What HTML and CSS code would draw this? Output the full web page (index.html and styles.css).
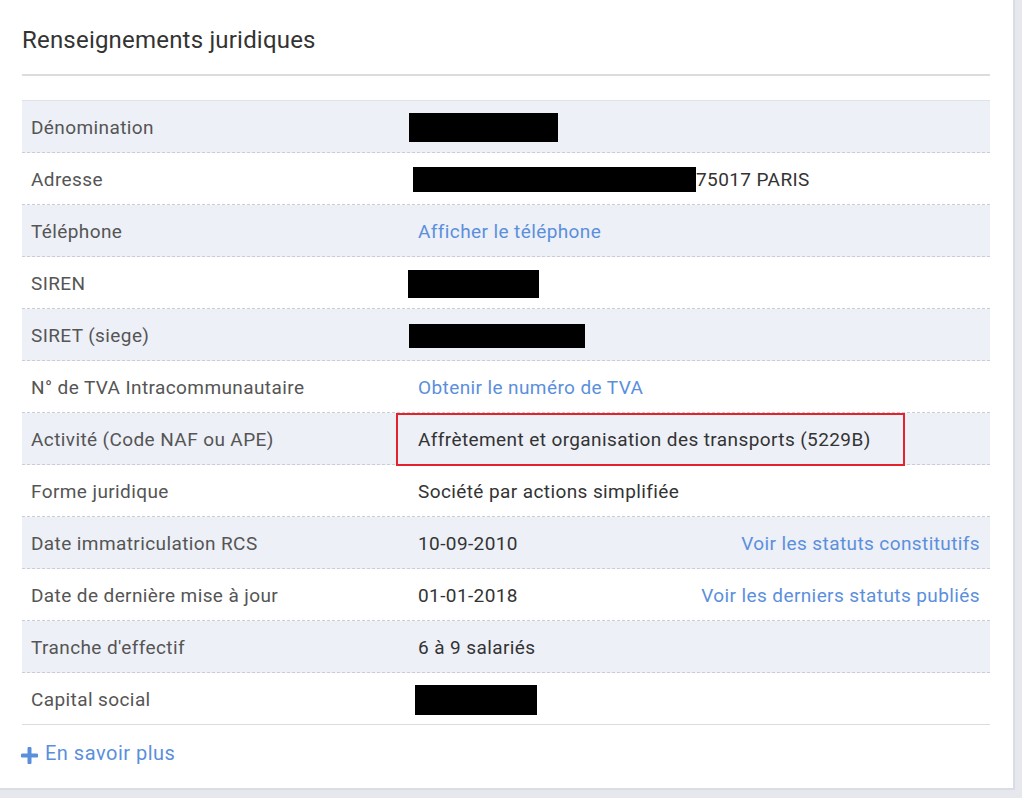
FILE: index.html
```html
<!DOCTYPE html>
<html lang="fr">
<head>
<meta charset="utf-8">
<title>Renseignements juridiques</title>
<link rel="stylesheet" href="styles.css">
</head>
<body>
<div class="card">
  <h2 class="title">Renseignements juridiques</h2>
  <div class="table">
    <div class="row alt">
      <div class="label">Dénomination</div>
      <div class="value"><span class="redact" style="width:149px;height:29px;margin-left:-9px"></span></div>
    </div>
    <div class="row">
      <div class="label">Adresse</div>
      <div class="value"><span class="redact" style="width:283px;height:25px;margin-left:-5px"></span><span>75017 PARIS</span></div>
    </div>
    <div class="row alt">
      <div class="label">Téléphone</div>
      <div class="value"><a class="link" href="#">Afficher le téléphone</a></div>
    </div>
    <div class="row">
      <div class="label">SIREN</div>
      <div class="value"><span class="redact" style="width:131px;height:28px;margin-left:-10px"></span></div>
    </div>
    <div class="row alt">
      <div class="label">SIRET (siege)</div>
      <div class="value"><span class="redact" style="width:176px;height:24px;margin-left:-9px"></span></div>
    </div>
    <div class="row">
      <div class="label">N° de TVA Intracommunautaire</div>
      <div class="value"><a class="link" href="#">Obtenir le numéro de TVA</a></div>
    </div>
    <div class="row alt">
      <div class="label">Activité (Code NAF ou APE)</div>
      <div class="value highlight"><span>Affrètement et organisation des transports (5229B)</span><span class="mark"></span></div>
    </div>
    <div class="row">
      <div class="label">Forme juridique</div>
      <div class="value"><span>Société par actions simplifiée</span></div>
    </div>
    <div class="row alt">
      <div class="label">Date immatriculation RCS</div>
      <div class="value split"><span>10-09-2010</span><a class="link" href="#">Voir les statuts constitutifs</a></div>
    </div>
    <div class="row">
      <div class="label">Date de dernière mise à jour</div>
      <div class="value split"><span>01-01-2018</span><a class="link" href="#">Voir les derniers statuts publiés</a></div>
    </div>
    <div class="row alt">
      <div class="label">Tranche d'effectif</div>
      <div class="value"><span>6 à 9 salariés</span></div>
    </div>
    <div class="row last">
      <div class="label">Capital social</div>
      <div class="value"><span class="redact" style="width:122px;height:30px;margin-left:-3px"></span></div>
    </div>
  </div>
  <a class="more" href="#">
    <svg class="plus" width="17" height="17" viewBox="0 0 17 17" aria-hidden="true"><path d="M8.5 1.5v14M1.5 8.5h14" stroke="#5b8fdc" stroke-width="4" stroke-linecap="round"/></svg>
    <span>En savoir plus</span>
  </a>
</div>
</body>
</html>
```

FILE: styles.css
```css
html, body {
  margin: 0;
  padding: 0;
}
body {
  background: #e6e8ee;
  font-family: Roboto, "Liberation Sans", Arial, sans-serif;
  width: 1022px;
  height: 798px;
  overflow: hidden;
}
.card {
  box-sizing: border-box;
  width: 1015px;
  height: 790px;
  background: #fff;
  border-right: 2px solid #d9dce2;
  border-bottom: 2px solid #d9dce2;
  padding: 0 23px 0 22px;
}
.title {
  margin: 0;
  padding: 26px 0 0 0;
  height: 48px;
  font-size: 24px;
  line-height: 28px;
  font-weight: 400;
  letter-spacing: 0.2px;
  color: #333;
  border-bottom: 2px solid #dcdcdc;
}
.table {
  margin-top: 24px;
  border-top: 1px solid #dfe2e8;
}
.row {
  display: flex;
  height: 52px;
  box-sizing: border-box;
  border-bottom: 1px dashed #c8ccd4;
  font-size: 19px;
  letter-spacing: 0.4px;
  align-items: center;
}
.row.alt {
  background: #edf0f7;
}
.row.last {
  border-bottom: 1px solid #dcdcdc;
}
.label {
  width: 387px;
  padding: 2px 0 0 9px;
  box-sizing: border-box;
  color: #555;
}
.value {
  flex: 1;
  padding: 2px 10px 0 9px;
  box-sizing: border-box;
  display: flex;
  align-items: center;
  color: #333;
  position: relative;
  height: 100%;
}
.value.split {
  justify-content: space-between;
}
.redact {
  display: inline-block;
  background: #000;
}
.link {
  color: #5b8fdc;
  text-decoration: none;
}
.mark {
  position: absolute;
  left: -13px;
  top: 0;
  width: 509px;
  height: 53px;
  box-sizing: border-box;
  border: 2px solid #e3222b;
}
.more {
  display: flex;
  align-items: center;
  gap: 7px;
  margin-top: 16px;
  margin-left: -1px;
  font-size: 20px;
  letter-spacing: 0.5px;
  color: #5b8fdc;
  text-decoration: none;
}
.plus {
  margin-top: 4px;
}
```
